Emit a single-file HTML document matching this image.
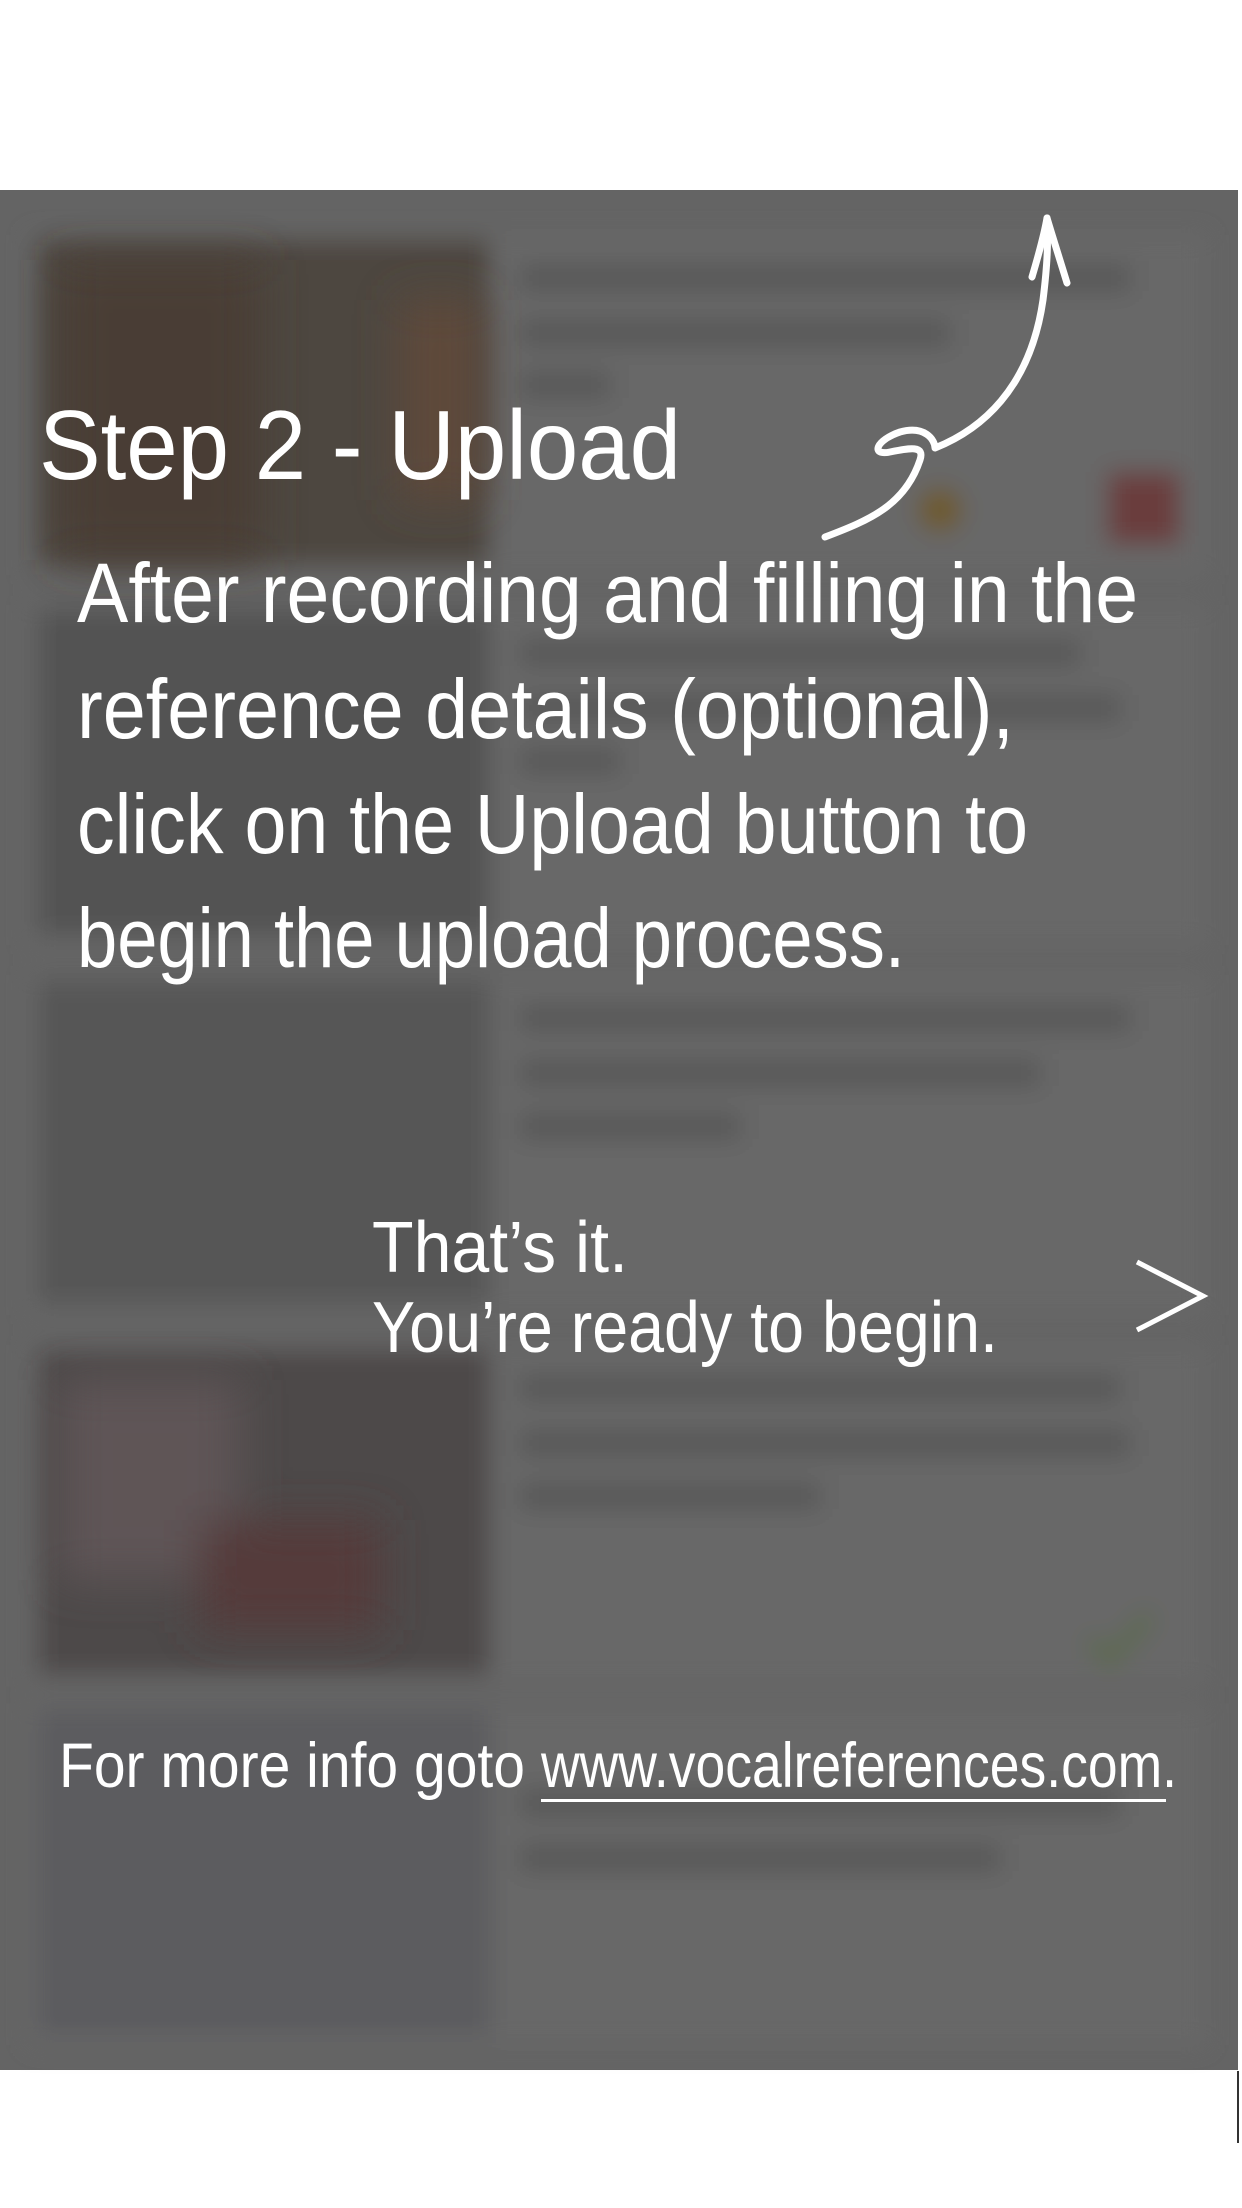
<!DOCTYPE html>
<html><head><meta charset="utf-8"><style>html,body{margin:0;padding:0;background:#fff}svg{display:block}</style></head>
<body>
<svg width="1242" height="2208" viewBox="0 0 1242 2208" xmlns="http://www.w3.org/2000/svg">
<defs>
<filter id="b" x="-10%" y="-10%" width="120%" height="120%"><feGaussianBlur stdDeviation="12"/></filter>
<filter id="b2" x="-10%" y="-10%" width="120%" height="120%"><feGaussianBlur stdDeviation="22"/></filter>
</defs>
<rect x="0" y="190" width="1238" height="1880" fill="#646464"/>
<g filter="url(#b)">
  <rect x="30" y="235" width="1175" height="340" fill="#676767"/>
  <rect x="30" y="605" width="1175" height="340" fill="#676767"/>
  <rect x="30" y="975" width="1175" height="340" fill="#676767"/>
  <rect x="30" y="1345" width="1175" height="340" fill="#676767"/>
  <rect x="30" y="1705" width="1175" height="340" fill="#676767"/>
  <rect x="38" y="240" width="452" height="325" fill="#4e4740"/>
  <rect x="38" y="610" width="452" height="325" fill="#525252"/>
  <rect x="38" y="980" width="452" height="325" fill="#575757"/>
  <rect x="38" y="1350" width="452" height="325" fill="#4e4a4a"/>
  <rect x="38" y="1710" width="452" height="325" fill="#5c5c5e"/>
  <g fill="#575757">
    <rect x="520" y="265" width="610" height="26"/><rect x="520" y="320" width="430" height="26"/><rect x="520" y="372" width="90" height="26"/>
    <rect x="520" y="640" width="560" height="26"/><rect x="520" y="695" width="600" height="26"/><rect x="520" y="748" width="100" height="26"/>
    <rect x="520" y="1005" width="610" height="26"/><rect x="520" y="1060" width="520" height="26"/><rect x="520" y="1113" width="220" height="26"/>
    <rect x="520" y="1375" width="600" height="26"/><rect x="520" y="1430" width="610" height="26"/><rect x="520" y="1483" width="300" height="26"/>
    <rect x="520" y="1790" width="600" height="26"/><rect x="520" y="1845" width="480" height="26"/>
  </g>
  <rect x="1108" y="472" width="72" height="72" fill="#6a3e3c"/>
  <circle cx="940" cy="510" r="22" fill="#6e5a2c"/>
  <path d="M1090 1640 l20 20 l40 -45" stroke="#5c6a4c" stroke-width="14" fill="none"/>
</g>
<g filter="url(#b2)">
  <rect x="60" y="260" width="200" height="300" fill="#4a3e34"/>
  <rect x="400" y="300" width="80" height="200" fill="#5e4a3a"/>
  <rect x="60" y="1380" width="180" height="200" fill="#5e5456"/>
  <rect x="200" y="1520" width="180" height="110" fill="#553a3a"/>
</g>
<rect x="1237" y="2071" width="2" height="72" fill="#333"/>
<g fill="#fff" font-family="'Liberation Sans', sans-serif">
  <text x="39" y="479" font-size="98" textLength="642" lengthAdjust="spacingAndGlyphs">Step 2 - Upload</text>
  <text x="77" y="622" font-size="84" textLength="1061" lengthAdjust="spacingAndGlyphs">After recording and filling in the</text>
  <text x="77" y="738" font-size="84" textLength="937" lengthAdjust="spacingAndGlyphs">reference details (optional),</text>
  <text x="77" y="853" font-size="84" textLength="951" lengthAdjust="spacingAndGlyphs">click on the Upload button to</text>
  <text x="77" y="967" font-size="84" textLength="828" lengthAdjust="spacingAndGlyphs">begin the upload process.</text>
  <text x="372" y="1272" font-size="72" textLength="256" lengthAdjust="spacingAndGlyphs">That’s it.</text>
  <text x="372" y="1352" font-size="72" textLength="626" lengthAdjust="spacingAndGlyphs">You’re ready to begin.</text>
  <text x="59" y="1787" font-size="63" textLength="466" lengthAdjust="spacingAndGlyphs">For more info goto</text>
  <text x="541" y="1787" font-size="63" textLength="636" lengthAdjust="spacingAndGlyphs">www.vocalreferences.com.</text>
</g>
<rect x="541" y="1799" width="625" height="3" fill="#fff"/>
<polyline points="1137,1262 1203,1296 1137,1330" fill="none" stroke="#fff" stroke-width="5"/>
<g fill="none" stroke="#fff" stroke-width="7" stroke-linecap="round" stroke-linejoin="round">
  <path d="M825 537 C870 520 905 505 920 460 C925 445 910 448 890 452 C870 456 876 440 900 432 C925 425 935 440 935 448 C980 430 1030 390 1043 300 C1048 260 1048 240 1047 218"/>
  <path d="M1032 277 C1040 250 1045 230 1047 218 C1052 235 1060 260 1067 283"/>
</g>
</svg>
</body></html>
